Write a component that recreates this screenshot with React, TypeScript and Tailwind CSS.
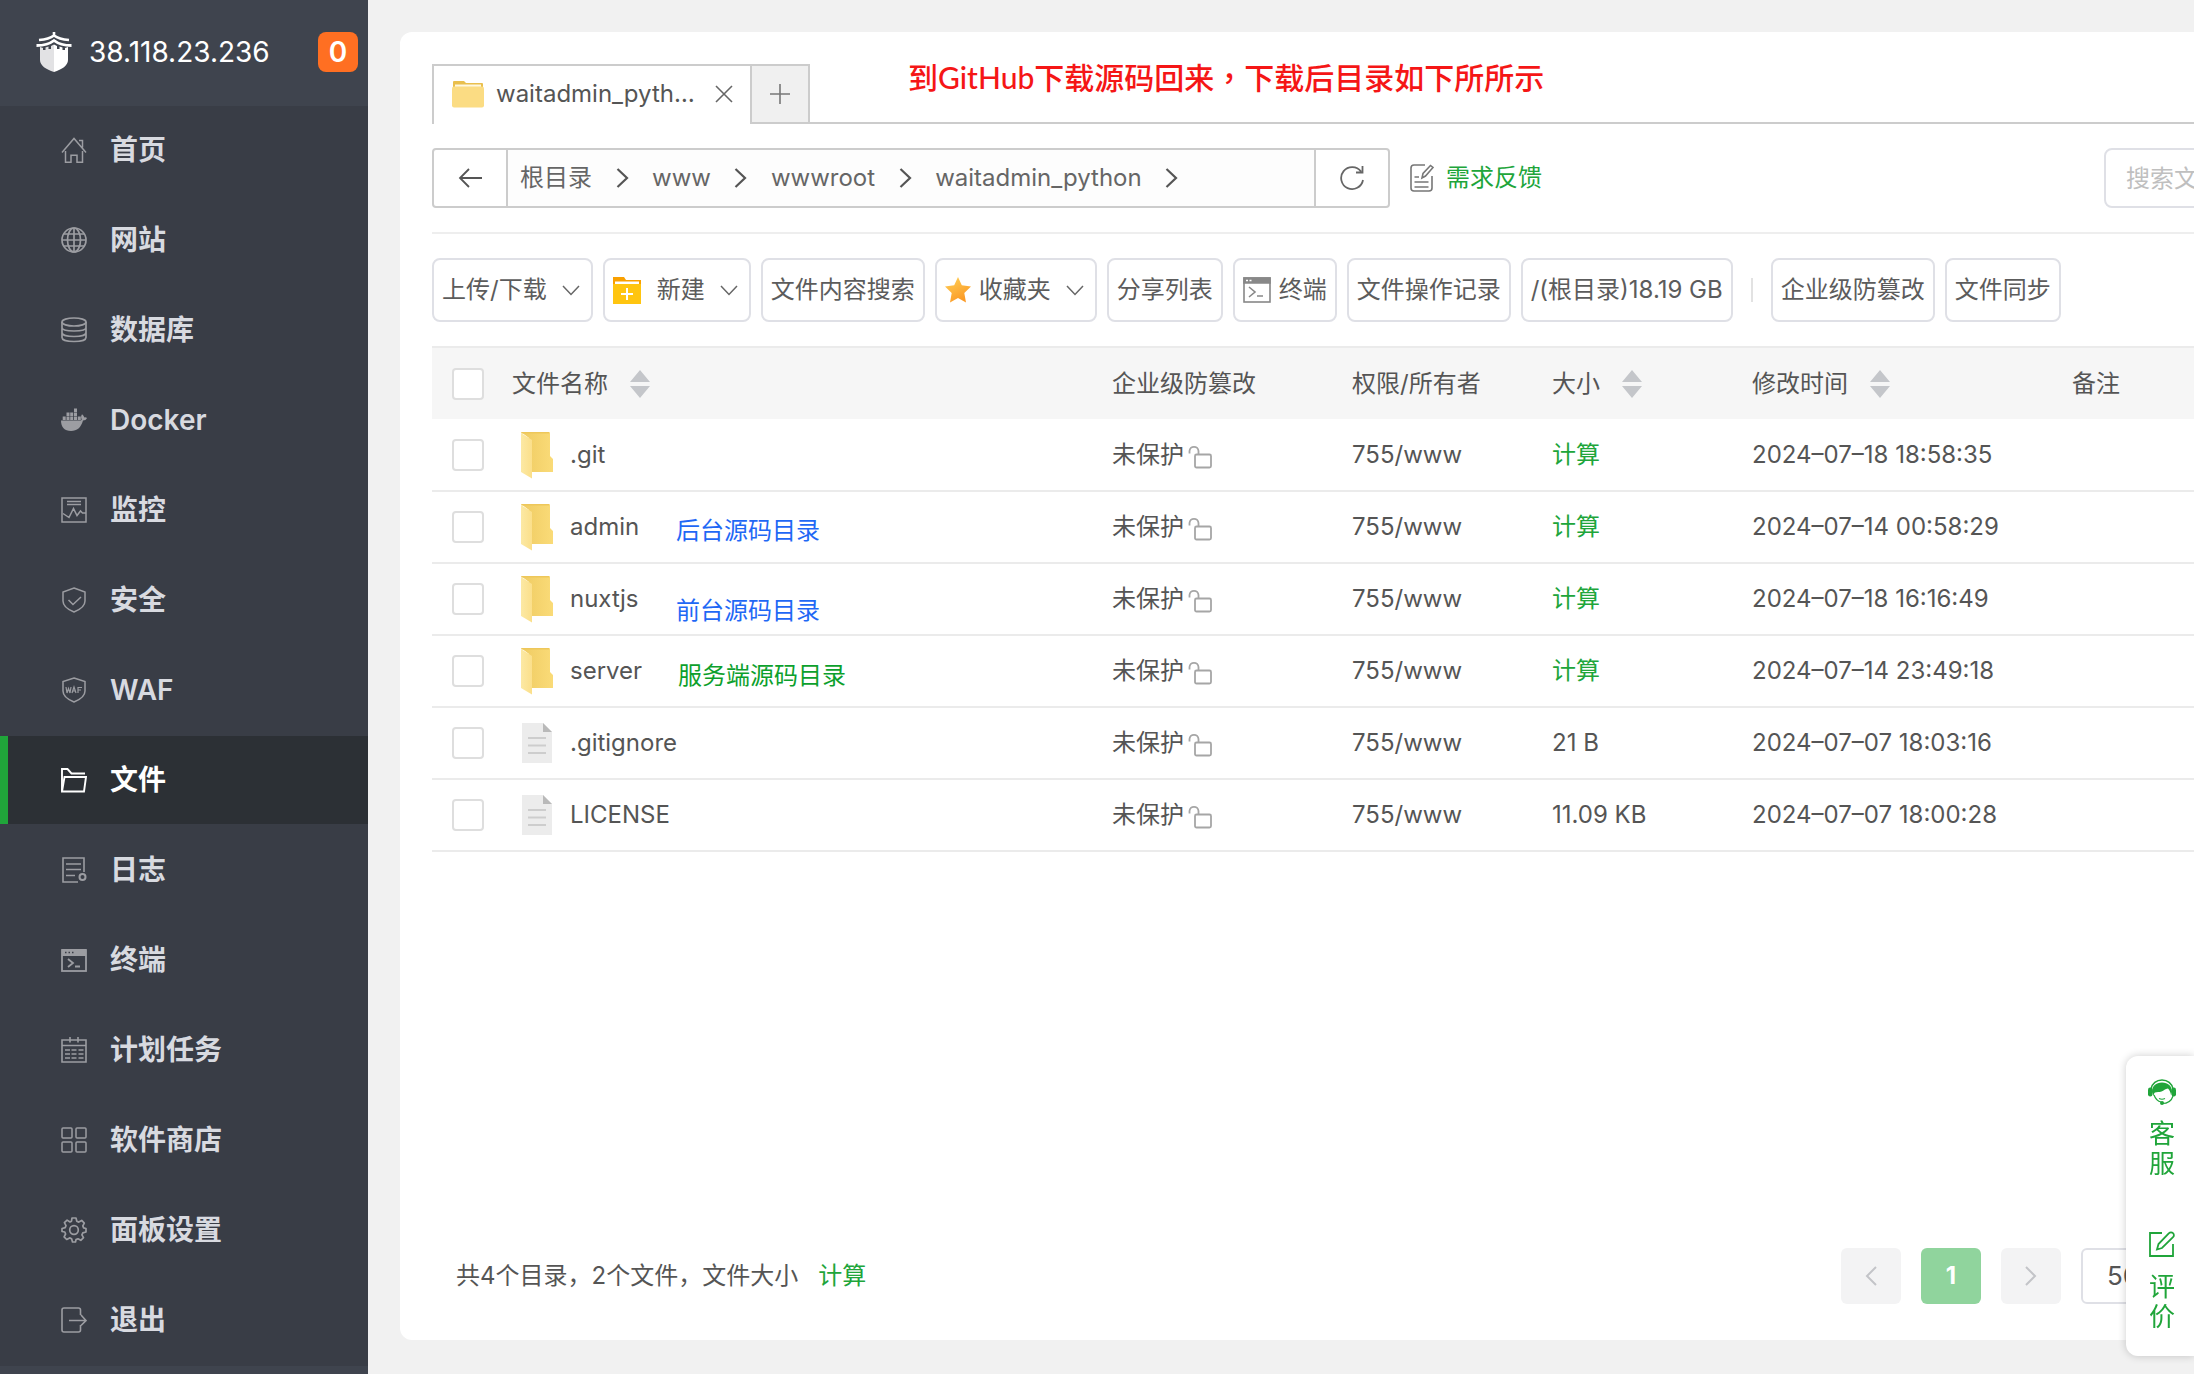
import type { ReactNode } from "react";

function Line({ children, size = 26, w = 1.5 }: { children: ReactNode; size?: number; w?: number }) {
  return (
    <svg width={size} height={size} viewBox="0 0 26 26" fill="none" stroke="currentColor" strokeWidth={w} aria-hidden="true" className="shrink-0">
      {children}
    </svg>
  );
}

function TerminalIcon({ size = 26 }: { size?: number }) {
  return (
    <Line size={size} w={1.8}>
      <rect x="1" y="3" width="24" height="21" />
      <rect x="1" y="2" width="24" height="7" fill="currentColor" stroke="none" />
      <path d="M7 12l5 4-5 4M14 19.500h5" />
      <path d="M4 5.500h1.500M7.500 5.500H9M11 5.500h1.500" stroke="#393d46" strokeWidth="1.300" />
    </Line>
  );
}

function DockerIcon() {
  return (
    <svg width="26" height="26" viewBox="0 0 26 26" fill="currentColor" aria-hidden="true" className="shrink-0">
      <path d="M13 1.500h3V5h-3zM5.500 5.500h3V9h-3zM9.200 5.500h3V9h-3zM13 5.500h3V9h-3zM1.700 9.500h3V13h-3zM5.500 9.500h3V13h-3zM9.200 9.500h3V13h-3zM13 9.500h3V13h-3zM16.800 9.500h3V13h-3z" />
      <path d="M0 13.500h19c1 0 1.700-.5 1.700-1.300-.9-1.600-.7-3.600.3-5 1.300.8 2 2 2.100 3.300 1.100-.3 2.200-.1 2.900.5-.7 1.700-2.200 2.500-4 2.500C20 20.500 16 24 10 24 3.500 24 0 20 0 13.500z" />
    </svg>
  );
}

const menu: { label: string; icon: ReactNode; active?: boolean }[] = [
  {
    label: "首页",
    icon: (
      <Line>
        <path d="M1 15.500L13 1.500l12 14M18 3.500h3.500v7M4.500 14v11.200h5.500v-7h6v7h5.500V14" />
      </Line>
    ),
  },
  {
    label: "网站",
    icon: (
      <Line w={1.7}>
        <circle cx="13" cy="13" r="12" />
        <ellipse cx="13" cy="13" rx="6.500" ry="12" />
        <path d="M13 1v24M1 13h24M3 7h20M3 19h20" />
      </Line>
    ),
  },
  {
    label: "数据库",
    icon: (
      <Line w={1.7}>
        <ellipse cx="13" cy="5" rx="12" ry="4" />
        <path d="M1 5v15.500c0 2.500 5.500 4 12 4s12-1.500 12-4V5M1 10.500c0 2.500 5.500 3.500 12 3.500s12-1 12-3.500M1 15.500c0 2.500 5.500 4 12 4s12-1.500 12-4" />
      </Line>
    ),
  },
  { label: "Docker", icon: <DockerIcon /> },
  {
    label: "监控",
    icon: (
      <Line>
        <rect x="1" y="1" width="24" height="24" />
        <path d="M6 4.500h14M6 7.500h14M2 16.500l6 4 4.500-9 3.500 7 3.500-4.500 2 2H25" />
      </Line>
    ),
  },
  {
    label: "安全",
    icon: (
      <Line>
        <path d="M13 1l11 4v9c0 5.500-6 9-11 11-5-2-11-5.500-11-11V5z" />
        <path d="M7.500 13l4.500 4.500 8-7.500" />
      </Line>
    ),
  },
  {
    label: "WAF",
    icon: (
      <Line>
        <path d="M13 1l11 3.500V14c0 5.500-6 9-11 11-5-2-11-5.500-11-11V4.500z" />
        <path d="M5 10l1 6 1.500-4.500L9 16l1-6M11 16l2-6 2 6M11.700 14h2.600M17 16v-5.500h4M17 13h3" strokeWidth="1.200" />
      </Line>
    ),
  },
  {
    label: "文件",
    active: true,
    icon: (
      <Line w={1.9}>
        <path d="M1 24V2h5.500l4 4.500H24" />
        <path d="M3.500 10H25l-2 14.500H1z" />
      </Line>
    ),
  },
  {
    label: "日志",
    icon: (
      <Line w={1.6}>
        <path d="M23 15V1H2v24h15M5 7h15M5 12.500h15M5 18.500h9" />
        <circle cx="21.500" cy="20" r="3" strokeWidth="2" />
      </Line>
    ),
  },
  { label: "终端", icon: <TerminalIcon /> },
  {
    label: "计划任务",
    icon: (
      <Line w={1.6}>
        <path d="M1 3h24v22H1zM1 8.500h24M9 0v5.500M17 0v5.500" />
        <path d="M4 13h5M10.500 13h5M17.500 13h5M4 17h5M10.500 17h5M17.500 17h5M4 21h5M10.500 21h5M17.500 21h5" />
      </Line>
    ),
  },
  {
    label: "软件商店",
    icon: (
      <Line>
        <rect x="1" y="1" width="10" height="10" rx="1" />
        <rect x="15" y="1" width="10" height="10" rx="1" />
        <rect x="1" y="15" width="10" height="10" rx="1" />
        <rect x="15" y="15" width="10" height="10" rx="1" />
      </Line>
    ),
  },
  {
    label: "面板设置",
    icon: (
      <Line w={1.7}>
        <circle cx="13" cy="13" r="4.300" />
        <path d="M11 1h4l.8 3.200 2 .9 2.900-1.700 2.600 2.700-1.500 2.800.8 2L25 11.500v3.500l-3.200.9-.9 2 1.600 2.800-2.700 2.600-2.800-1.500-2 .8L14.500 25h-3l-.9-3.200-2-.9-2.900 1.600-2.600-2.700 1.500-2.800-.8-2L1 14.500v-3l3.200-.9.8-2-1.600-2.900 2.700-2.600L9 5l1.500-.8z" strokeLinejoin="round" />
      </Line>
    ),
  },
  {
    label: "退出",
    icon: (
      <Line w={1.6}>
        <path d="M19.500 8V3a2 2 0 0 0-2-2H3a2 2 0 0 0-2 2v20a2 2 0 0 0 2 2h14.500a2 2 0 0 0 2-2v-5" />
        <path d="M8 13.500h17M20 8l5 5.500-5 5" />
      </Line>
    ),
  },
];

function Logo() {
  return (
    <svg width="38" height="42" viewBox="0 0 38 42" fill="none" aria-hidden="true" className="shrink-0">
      <path d="M19 1v5M4 9c6-.5 11-1.500 15-4.500C23 7.500 28 8.500 34 9" stroke="#fff" strokeWidth="2.600" />
      <path d="M1.500 14.500C8 14.500 14.500 13 19 9.500c4.500 3.500 11 5 17.500 5" stroke="#fff" strokeWidth="2.800" />
      <path d="M5 16l3 1v2h2.500v-2.500l3-1V18H16v-3l3-1.500V41C11 38.500 5 34.500 5 29z" fill="#e2e2e4" />
      <path d="M33 16l-3 1v2h-2.500v-2.500l-3-1V18H22v-3l-3-1.500V41c8-2.500 14-6.500 14-12z" fill="#fff" />
    </svg>
  );
}

function Sidebar() {
  return (
    <aside className="flex w-[368px] shrink-0 flex-col bg-[#3f444e]">
      <div className="flex h-[106px] items-center pr-[10px] pb-[2px] pl-[35px]">
        <Logo />
        <span className="ml-4 text-[28px] text-white">38.118.23.236</span>
        <span className="ml-auto flex size-10 items-center justify-center rounded-lg bg-[#ff6f22] text-[28px] font-semibold text-white">0</span>
      </div>
      <nav className="flex flex-col bg-[#393d46]">
        {menu.map((m) => (
          <a
            key={m.label}
            href="#"
            className={
              m.active
                ? "mb-[2px] flex h-[88px] items-center border-l-8 border-[#20a53a] bg-[#2c3035] pl-[53px] text-white"
                : "mb-[2px] flex h-[88px] items-center pl-[61px] text-[#9c9da2]"
            }
          >
            <span className="flex w-[49px]">{m.icon}</span>
            <span className={m.active ? "text-[28px] font-semibold text-white" : "text-[28px] font-semibold text-[#d8dae0]"}>{m.label}</span>
          </a>
        ))}
      </nav>
    </aside>
  );
}

function TabFolder() {
  return (
    <svg width="32" height="28" viewBox="0 0 32 28" aria-hidden="true" className="shrink-0">
      <path d="M1 2a1 1 0 0 1 1-1h10l2 2h16a1 1 0 0 1 1 1v10H1z" fill="#e9bf4d" />
      <rect x="3" y="4.500" width="26" height="4" fill="#fff8df" />
      <rect x="0" y="6.500" width="32" height="21" rx="2" fill="#fbdc83" />
    </svg>
  );
}

function RowFolder() {
  return (
    <svg width="32" height="48" viewBox="0 0 32 48" aria-hidden="true" className="shrink-0">
      <defs>
        <linearGradient id="flap" x1="0" x2="1">
          <stop offset="0" stopColor="#fce9a4" />
          <stop offset="1" stopColor="#fbdf8a" />
        </linearGradient>
        <linearGradient id="body" x1="0" x2="1">
          <stop offset="0" stopColor="#efcb62" />
          <stop offset="1" stopColor="#fadb78" />
        </linearGradient>
      </defs>
      <g transform="translate(0 1)">
        <path d="M0 0h28a1 1 0 0 1 1 1v23l3 3v13H8V6z" fill="url(#body)" />
        <path d="M0 1l11 7v38.500L0 40z" fill="url(#flap)" />
        <path d="M0 0h28v1.500H1z" fill="#eec75a" />
      </g>
    </svg>
  );
}

function RowFile() {
  return (
    <svg width="32" height="48" viewBox="0 0 32 48" aria-hidden="true" className="shrink-0">
      <path d="M1 4h21l9 9v31H1z" fill="#ececec" />
      <path d="M22 4v9h9z" fill="#b9b9b9" />
      <path d="M7 19h18M7 26.500h18M7 34h18" stroke="#cdcdcd" strokeWidth="2" />
    </svg>
  );
}

function LockOpen() {
  return (
    <svg width="24" height="24" viewBox="0 0 24 24" fill="none" stroke="#a6a6a6" strokeWidth="1.800" aria-hidden="true" className="mt-1 shrink-0">
      <rect x="7" y="9.500" width="16" height="13" rx="1.500" />
      <path d="M1.500 8.500V6A4.500 4.500 0 0 1 6 1.800 4.500 4.500 0 0 1 10.500 6v3.500" />
    </svg>
  );
}

function Sort() {
  return (
    <svg width="20" height="28" viewBox="0 0 20 28" fill="#c4c6ca" aria-hidden="true">
      <path d="M10 0l10 12H0zM10 28L0 16h20z" />
    </svg>
  );
}

function Down() {
  return (
    <svg width="18" height="11" viewBox="0 0 18 11" fill="none" stroke="#666" strokeWidth="1.500" aria-hidden="true">
      <path d="M1 1l8 8.500L17 1" />
    </svg>
  );
}

function Crumb({ label }: { label: string }) {
  return (
    <li className="flex items-center">
      <a href="#">{label}</a>
      <span className="flex w-[60px] justify-center">
        <svg width="13" height="20" viewBox="0 0 13 20" fill="none" stroke="#555" strokeWidth="2.200" aria-hidden="true">
          <path d="M1.500 1l9.500 9-9.500 9" />
        </svg>
      </span>
    </li>
  );
}

function ToolButton({ children, menu: hasMenu }: { children: ReactNode; menu?: boolean }) {
  return (
    <button
      type="button"
      className={
        hasMenu
          ? "flex h-16 shrink-0 items-center rounded-lg border-2 border-[#dfe0e6] bg-white pr-[11px] pl-2 whitespace-nowrap"
          : "flex h-16 shrink-0 items-center rounded-lg border-2 border-[#dfe0e6] bg-white px-2 whitespace-nowrap"
      }
    >
      {children}
      {hasMenu && (
        <span className="ml-[15px]">
          <Down />
        </span>
      )}
    </button>
  );
}

const rows = [
  { name: ".git", dir: true, size: "计算", time: "2024–07–18 18:58:35" },
  { name: "admin", dir: true, size: "计算", time: "2024–07–14 00:58:29", note: "后台源码目录", noteClass: "absolute top-[23px] left-[164px] text-[#1f68f5]" },
  { name: "nuxtjs", dir: true, size: "计算", time: "2024–07–18 16:16:49", note: "前台源码目录", noteClass: "absolute top-[31px] left-[164px] text-[#1f68f5]" },
  { name: "server", dir: true, size: "计算", time: "2024–07–14 23:49:18", note: "服务端源码目录", noteClass: "absolute top-[24px] left-[166px] text-[#0ca02c]" },
  { name: ".gitignore", dir: false, size: "21 B", time: "2024–07–07 18:03:16" },
  { name: "LICENSE", dir: false, size: "11.09 KB", time: "2024–07–07 18:00:28" },
];

const check = "block size-8 appearance-none rounded border-2 border-[#dedede] bg-white";

function FileTable() {
  return (
    <table className="w-full table-fixed text-left">
      <colgroup>
        <col className="w-[80px]" />
        <col />
        <col className="w-[240px]" />
        <col className="w-[200px]" />
        <col className="w-[200px]" />
        <col className="w-[320px]" />
        <col className="w-[122px]" />
      </colgroup>
      <thead>
        <tr className="h-[72px] border-t-2 border-[#ebebeb] bg-[#f6f6f6]">
          <th className="pl-5">
            <input type="checkbox" aria-label="全选" className={check} />
          </th>
          <th className="font-normal">
            <span className="flex items-center gap-[22px]">文件名称<Sort /></span>
          </th>
          <th className="font-normal">企业级防篡改</th>
          <th className="font-normal">权限/所有者</th>
          <th className="font-normal">
            <span className="flex items-center gap-[22px]">大小<Sort /></span>
          </th>
          <th className="font-normal">
            <span className="flex items-center gap-[22px]">修改时间<Sort /></span>
          </th>
          <th className="font-normal">备注</th>
        </tr>
      </thead>
      <tbody>
        {rows.map((r) => (
          <tr key={r.name} className="h-[72px] border-b-2 border-[#ebebeb]">
            <td className="pl-5">
              <input type="checkbox" aria-label={r.name} className={check} />
            </td>
            <td className="relative">
              <span className="flex items-center gap-[17px] pl-[9px]">
                {r.dir ? <RowFolder /> : <RowFile />}
                <a href="#">{r.name}</a>
              </span>
              {r.note && <span className={r.noteClass}>{r.note}</span>}
            </td>
            <td>
              <span className="flex items-center gap-1">
                未保护
                <LockOpen />
              </span>
            </td>
            <td>755/www</td>
            <td>{r.dir ? <a href="#" className="text-[#20a53a]">{r.size}</a> : r.size}</td>
            <td className="whitespace-nowrap">{r.time}</td>
            <td />
          </tr>
        ))}
      </tbody>
    </table>
  );
}

function PageArrow({ d, label }: { d: string; label: string }) {
  return (
    <button type="button" aria-label={label} className="flex h-14 w-15 items-center justify-center rounded-md bg-[#f3f3f4]">
      <svg width="12" height="20" viewBox="0 0 12 20" fill="none" stroke="#c3c4c8" strokeWidth="2" aria-hidden="true">
        <path d={d} />
      </svg>
    </button>
  );
}

function SupportPanel() {
  return (
    <div className="fixed right-0 bottom-[18px] flex h-[300px] w-[68px] flex-col items-center rounded-l-xl bg-white pt-[23px] pl-1 text-[26px] leading-[30px] text-[#20a53a] shadow-[0_0_8px_rgba(0,0,0,0.2)]">
      <a href="#" className="flex flex-col items-center">
        <svg width="28" height="26" viewBox="0 0 28 26" fill="none" aria-hidden="true">
          <path d="M3 10C4 4.500 8.500 1 14 1s10 3.500 11 9" stroke="currentColor" strokeWidth="1.500" />
          <path d="M4 13C4 7 8 3.500 14 3.500S24 7 24 13l-1 3c-.5-3-1.500-5-3-6.500-3 .5-4 2-6.500 3-2.500.8-4.500.5-6.500 1-1 .5-1 1.500-1.500 3.500z" fill="currentColor" />
          <rect x="0" y="8.500" width="4.500" height="9" rx="2.200" fill="currentColor" />
          <rect x="23.500" y="8.500" width="4.500" height="9" rx="2.200" fill="currentColor" />
          <path d="M6 16c1.500 4 4 6.500 7 7M11 19.500c2 1 4 1 6 0M25 17c-1.500 5-5.500 7.500-11 7.500" stroke="currentColor" strokeWidth="1.200" />
          <circle cx="14" cy="24" r="2" fill="currentColor" />
        </svg>
        <span className="mt-[14px] w-[26px] text-center">客服</span>
      </a>
      <a href="#" className="mt-[52px] flex flex-col items-center">
        <Line w={1.8}>
          <path d="M13 2H1v23h23V13" />
          <path d="M8 18.500l1.500-5.500L20 2.200a2.700 2.700 0 0 1 4 0 2.700 2.700 0 0 1 0 4L13 17z" />
        </Line>
        <span className="mt-[15px] w-[26px] text-center">评价</span>
      </a>
    </div>
  );
}

export default function App() {
  return (
    <div className="flex min-h-screen overflow-hidden bg-[#f1f1f1] font-['Inter','Noto_Sans_CJK_SC',sans-serif] text-[24px] leading-8 text-[#555]">
      <Sidebar />
      <main className="flex min-w-0 flex-1 flex-col overflow-hidden pt-8 pb-[34px] pl-8">
        <section className="flex flex-1 flex-col rounded-l-xl bg-white pt-8 pl-8">
          <div className="flex h-15 items-stretch">
            <div className="flex w-[320px] shrink-0 items-center border-2 border-b-0 border-[#ccc] pr-[17px] pb-[2px] pl-[18px]">
              <TabFolder />
              <span className="ml-3 truncate">waitadmin_pyth…</span>
              <button type="button" aria-label="关闭" className="ml-auto">
                <svg width="18" height="18" viewBox="0 0 18 18" stroke="#666" strokeWidth="1.600" aria-hidden="true">
                  <path d="M1 1l16 16M17 1L1 17" />
                </svg>
              </button>
            </div>
            <button type="button" aria-label="新标签" className="flex w-[58px] shrink-0 items-center justify-center border-2 border-l-0 border-[#ccc] bg-[#f0f0f0]">
              <svg width="20" height="20" viewBox="0 0 20 20" stroke="#777" strokeWidth="1.600" aria-hidden="true">
                <path d="M10 0v20M0 10h20" />
              </svg>
            </button>
            <div className="flex-1 border-b-2 border-[#ccc] pl-[98px] font-['Lato','Noto_Sans_CJK_SC',sans-serif] text-[30px] leading-6 font-medium whitespace-nowrap text-[#f51616]">
              到GitHub下载源码回来<span className="font-['Noto_Sans_CJK_TC',sans-serif]" lang="zh-TW">，</span>下载后目录如下所所示
            </div>
          </div>

          <div className="mt-6 flex h-15 items-center">
            <button type="button" aria-label="返回" className="flex h-15 w-[76px] shrink-0 items-center justify-center rounded-l border-2 border-[#ccc]">
              <svg width="24" height="20" viewBox="0 0 24 20" fill="none" stroke="#555" strokeWidth="1.800" aria-hidden="true">
                <path d="M11 1L2 10l9 9M2 10h22" />
              </svg>
            </button>
            <ol className="flex h-15 w-[806px] shrink-0 items-center border-y-2 border-[#ccc] bg-[#fdfdfd] pl-3 text-[#666]">
              <Crumb label="根目录" />
              <Crumb label="www" />
              <Crumb label="wwwroot" />
              <Crumb label="waitadmin_python" />
            </ol>
            <button type="button" aria-label="刷新" className="flex h-15 w-[76px] shrink-0 items-center justify-center rounded-r border-2 border-[#ccc]">
              <svg width="26" height="26" viewBox="0 0 26 26" fill="none" stroke="#666" strokeWidth="1.800" aria-hidden="true">
                <path d="M24 15A11 11 0 1 1 22 6.500M23.500 1v6.500H17" />
              </svg>
            </button>
            <a href="#" className="ml-5 flex shrink-0 items-center gap-3 text-[#20a53a]">
              <svg width="24" height="28" viewBox="0 0 24 28" fill="none" stroke="#777" strokeWidth="1.600" aria-hidden="true">
                <path d="M15 1H4a3 3 0 0 0-3 3v20a3 3 0 0 0 3 3h15a3 3 0 0 0 3-3V12M4.500 13H9M4.500 18h14M4.500 23h14" />
                <path d="M12 14l1-4.500 7.500-8 2.500 2-7.500 8.500z" />
              </svg>
              需求反馈
            </a>
            <input
              type="search"
              aria-label="搜索文件"
              placeholder="搜索文件/目录"
              className="-mr-[310px] ml-auto h-15 w-[400px] shrink-0 rounded-lg border-2 border-[#dfe0e6] px-5 placeholder:text-[#bfbfbf]"
            />
          </div>

          <div className="mt-6 border-t-2 border-[#eee]" />

          <div className="mt-6 flex items-center gap-[10px] text-[#5c5c5c]">
            <ToolButton menu>上传/下载</ToolButton>
            <ToolButton menu>
              <svg width="28" height="28" viewBox="0 0 28 28" aria-hidden="true" className="mr-4">
                <path d="M0 1h11l2 3h15v24H0z" fill="#f9a000" />
                <path d="M0 8h28v20H0z" fill="#ffc510" />
                <path d="M2 5.500h24V8H2z" fill="#fff" />
                <path d="M14 12v12M8 18h12" stroke="#fff" strokeWidth="2" />
              </svg>
              新建
            </ToolButton>
            <ToolButton>文件内容搜索</ToolButton>
            <ToolButton menu>
              <svg width="26" height="28" viewBox="0 0 26 28" aria-hidden="true" className="mr-2">
                <defs>
                  <linearGradient id="star" x1="0" y1="0" x2="0.500" y2="1">
                    <stop offset="0" stopColor="#ffd35a" />
                    <stop offset="1" stopColor="#fb9a26" />
                  </linearGradient>
                </defs>
                <path d="M13 1l3.800 8.300 9.200 1.200-6.700 6.400 1.700 9.600-8-4.500-8 4.500 1.700-9.600L0 10.500l9.200-1.200z" fill="url(#star)" />
              </svg>
              收藏夹
            </ToolButton>
            <ToolButton>分享列表</ToolButton>
            <ToolButton>
              <svg width="28" height="26" viewBox="0 0 28 26" fill="none" stroke="#888" strokeWidth="1.600" aria-hidden="true" className="mr-2">
                <rect x="1" y="1" width="26" height="24" />
                <path d="M1 1h26v5H1z" fill="#888" />
                <path d="M6 10l6 5-6 5M14 19h6" />
                <path d="M3 3.500h2M6.500 3.500h2" stroke="#fff" />
              </svg>
              终端
            </ToolButton>
            <ToolButton>文件操作记录</ToolButton>
            <ToolButton>/(根目录)18.19 GB</ToolButton>
            <span className="mx-2 h-6 w-[2px] shrink-0 bg-[#e2e2e2]" />
            <ToolButton>企业级防篡改</ToolButton>
            <ToolButton>文件同步</ToolButton>
          </div>

          <div className="mt-6">
            <FileTable />
          </div>

          <footer className="mt-auto mb-9 flex h-14 items-center pl-6">
            <span>共4个目录，2个文件，文件大小</span>
            <a href="#" className="ml-5 text-[#20a53a]">计算</a>
            <div className="-mr-[87px] ml-auto flex items-center gap-5">
              <PageArrow label="上一页" d="M11 1l-9 9 9 9" />
              <button type="button" aria-current="page" className="h-14 w-15 rounded-md bg-[#90d49d] font-bold text-white">1</button>
              <PageArrow label="下一页" d="M1 1l9 9-9 9" />
              <select aria-label="每页条数" className="h-14 w-[200px] appearance-none rounded-md border-2 border-[#dfe0e6] bg-white pl-[24px] text-[26px]">
                <option>50条/页</option>
              </select>
            </div>
          </footer>
        </section>
      </main>
      <SupportPanel />
    </div>
  );
}
